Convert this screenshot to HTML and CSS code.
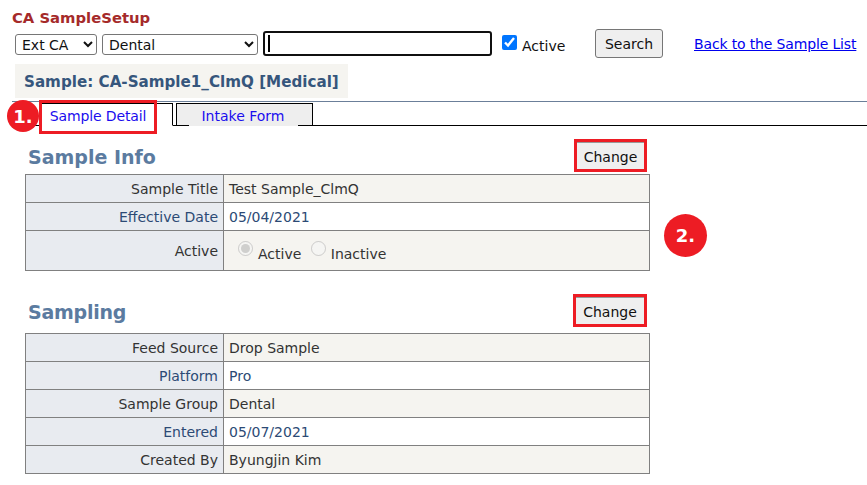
FILE: index.html
```html
<!DOCTYPE html>
<html lang="en">
<head>
<meta charset="utf-8">
<title>CA SampleSetup</title>
<link rel="stylesheet" href="styles.css">
</head>
<body>
<div class="page">
  <div class="app-title">CA SampleSetup</div>
  <form class="toolbar">
    <select class="sel sel-a"><option>Ext CA</option></select>
    <select class="sel sel-b"><option>Dental</option></select>
    <span class="search-wrap"><input class="search-input" type="text"><span class="caret"></span></span>
    <label class="active-check"><input type="checkbox" checked><span>Active</span></label>
    <button class="btn btn-search" type="button">Search</button>
    <a class="back-link" href="#">Back to the Sample List</a>
  </form>
  <div class="sample-head">Sample: CA-Sample1_ClmQ [Medical]</div>
  <div class="tabs">
    <a class="tab tab-on" href="#">Sample Detail</a>
    <a class="tab tab-off" href="#">Intake Form</a>
    <span class="callout callout-tab" aria-hidden="true"></span>
    <span class="badge badge-1">1.</span>
  </div>

  <section class="section section-info">
    <div class="section-head">
      <h2>Sample Info</h2>
      <span class="btn-mark"><button class="btn btn-change" type="button">Change</button></span>
    </div>
    <table class="grid">
      <tr class="odd"><th>Sample Title</th><td>Test Sample_ClmQ</td></tr>
      <tr><th>Effective Date</th><td>05/04/2021</td></tr>
      <tr class="odd tall"><th>Active</th><td>
        <label class="radio"><input type="radio" name="a" checked disabled><span>Active</span></label>
        <label class="radio"><input type="radio" name="a" disabled><span>Inactive</span></label>
      </td></tr>
    </table>
    <span class="badge badge-2">2.</span>
  </section>

  <section class="section section-sampling">
    <div class="section-head">
      <h2>Sampling</h2>
      <span class="btn-mark btn-mark-wide"><button class="btn btn-change" type="button">Change</button></span>
    </div>
    <table class="grid">
      <tr class="odd"><th>Feed Source</th><td>Drop Sample</td></tr>
      <tr><th>Platform</th><td>Pro</td></tr>
      <tr class="odd"><th>Sample Group</th><td>Dental</td></tr>
      <tr><th>Entered</th><td>05/07/2021</td></tr>
      <tr class="odd"><th>Created By</th><td>Byungjin Kim</td></tr>
    </table>
  </section>
</div>
</body>
</html>
```
FILE: styles.css
```css
* { box-sizing: border-box; }
html, body { margin: 0; padding: 0; background: #fff; overflow: hidden; }
body { font-family: "DejaVu Sans", Verdana, sans-serif; font-size: 14px; color: #333; }
.page { position: relative; width: 867px; height: 485px; padding: 9px 0 0 0; }
.app-title { margin-left: 12px; font-size: 14.8px; line-height: 17px; font-weight: 700; color: #a52a2a; }
.toolbar { display: flex; align-items: flex-start; height: 37px; margin-top: 3px; padding-left: 15px; color: #111; }
.sel { height: 21px; margin-top: 5px; font-family: inherit; font-size: 14px; color: #111; background: #fff; border: 1px solid #767676; border-radius: 3px; padding: 0 0 0 2px; }
.sel-a { width: 82px; }
.sel-b { width: 156px; margin-left: 5px; }
.search-wrap { position: relative; display: block; width: 229px; height: 25px; margin: 2px 0 0 5px; }
.search-input { display: block; width: 100%; height: 100%; border: 2px solid #101010; border-radius: 3px; background: #fff; outline: 0; }
.caret { position: absolute; left: 5px; top: 4px; width: 2px; height: 17px; background: #000; }
.active-check { display: flex; align-items: flex-start; margin: 6px 0 0 10px; width: 62px; }
.active-check input { width: 15px; height: 15px; margin: 0; accent-color: #0075ff; flex: none; }
.active-check span { margin: 3px 0 0 5px; line-height: 17px; }
.btn { font-family: inherit; font-size: 14px; color: #111; background: #efefef; border: 1px solid #767676; border-radius: 3px; padding: 0; }
.btn-search { width: 68px; height: 29px; margin-left: 31px; }
.back-link { margin: 6px 0 0 31px; line-height: 18px; color: #0000ee; text-decoration: underline; letter-spacing: -0.15px; }
.sample-head { width: 333px; height: 34px; margin: -2px 0 0 15px; padding: 1px 0 0 9px; background: #f5f4f0; font-weight: 700; font-size: 15.15px; line-height: 34px; color: #36567c; white-space: nowrap; }
.tabs { position: relative; display: flex; align-items: flex-end; height: 25px; margin: 3px 0 0 12px; padding-left: 28px; border-top: 1px solid #6b7f99; box-shadow: inset 0 -1px 0 #000; }
.tab { position: relative; display: block; height: 23px; font-size: 14px; line-height: 25px; color: #1a0dee; text-align: center; text-decoration: none; border: 1px solid #000; border-left: 0; }
.tab-on { width: 133px; padding: 0 16px 0 0; background: #fff; border-bottom-color: #fff; letter-spacing: -0.12px; }
.tab-off { width: 137px; margin-left: 3px; padding-right: 3px; background: #eee; border-left: 1px solid #000; }
.tab-off::after { content: ""; position: absolute; left: 12px; right: 14px; bottom: -1px; height: 1px; background: #eee; }
.callout { position: absolute; border: 3px solid #ed1c24; pointer-events: none; }
.callout-tab { left: 27px; top: -2px; width: 118px; height: 34px; }
.badge { position: absolute; display: flex; align-items: center; justify-content: center; border-radius: 50%; background: #ed1c24; color: #fff; font-weight: 700; font-size: 18px; }
.badge-1 { left: -5px; top: -2px; width: 32px; height: 32px; }
.badge-2 { left: 639px; top: 75px; width: 43px; height: 43px; }
.section { position: relative; margin-left: 25px; width: 625px; }
.section-info { margin-top: 13px; }
.section-sampling { margin-top: 23px; }
.section-head { display: flex; justify-content: space-between; align-items: flex-end; height: 35px; padding-left: 3px; padding-right: 3px; }
.section-sampling .section-head { height: 39px; align-items: flex-start; }
h2 { margin: 0; font-size: 19px; line-height: 24px; font-weight: 700; color: #5b7ba0; }
.section-info h2 { margin-bottom: 5px; }
.section-sampling h2 { margin-top: 6px; letter-spacing: -0.25px; }
.btn-mark { display: block; width: 73px; height: 33px; border: 3px solid #ed1c24; margin-bottom: 2px; }
.btn-mark-wide { width: 74px; }
.btn-change { display: block; width: 100%; height: 100%; border: 0; border-top: 1px solid #999; border-radius: 0; padding-top: 2px; }
.grid { width: 625px; border-collapse: collapse; table-layout: fixed; font-size: 14px; }
.grid th, .grid td { height: 28px; padding: 0 5px; border: 1px solid #808080; font-weight: 400; }
.grid th { width: 198px; background: #e8ebf0; text-align: right; padding-right: 5px; }
.grid td { background: #fff; color: #2c4a75; }
.grid tr.odd td { background: #f5f4f0; color: #333; }
.grid th { color: #2c4a75; }
.grid tr.odd th { color: #333; }
.grid .tall th, .grid .tall td { height: 40px; }
.grid .tall th { vertical-align: middle; padding-bottom: 0; }
.grid .tall td { padding-top: 2px; }
.radio { display: inline-flex; align-items: flex-start; margin-left: 9px; margin-right: -1px; }
.radio + .radio { margin-left: 6px; }
.radio input { width: 15px; height: 15px; margin: 0; }
.radio span { margin: 5px 0 0 5px; line-height: 17px; }
```
